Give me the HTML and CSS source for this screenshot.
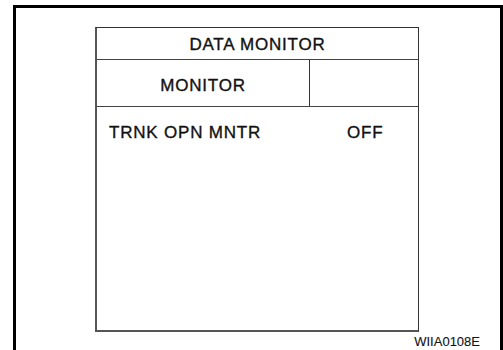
FILE: index.html
```html
<!DOCTYPE html>
<html lang="en">
<head>
  <meta charset="UTF-8" />
  <meta name="viewport" content="width=device-width, initial-scale=1.0" />
  <title>Data Monitor</title>
  <link rel="stylesheet" href="styles.css">
</head>
<body>
  <div class="frame">
    <div class="screen">
      <div class="screen-title">DATA MONITOR</div>
      <div class="screen-head">
        <div class="head-label">MONITOR</div>
        <div class="head-blank"></div>
      </div>
      <div class="screen-body">
        <div class="item-row">
          <span class="item-name">TRNK OPN MNTR</span>
          <span class="item-value">OFF</span>
        </div>
      </div>
    </div>
    <div class="fig-code">WIIA0108E</div>
  </div>
</body>
</html>
```

FILE: styles.css
```css
body {
  margin: 0;
  overflow: hidden;
  background-color: white;
  font-family: "Liberation Sans", Arial, sans-serif;
  color: #111;
  -webkit-text-stroke: 0.35px #111;
}

.frame {
  box-sizing: border-box;
  margin: 5px 0 0 13px;
  width: 490px;
  height: 345px;
  border: 3px solid black;
  border-bottom: none;
  padding: 19px 20px 0 79px;
}

.screen {
  box-sizing: border-box;
  width: 324px;
  height: 305px;
  border: 1px solid #333;
  border-left: 2px solid #555;
  border-bottom: 2px solid #555;
  display: flex;
  flex-direction: column;
}

.screen-title {
  height: 32px;
  line-height: 30px;
  padding-top: 2px;
  box-sizing: border-box;
  border-bottom: 1px solid #444;
  text-align: center;
  font-size: 17px;
  letter-spacing: 0.8px;
}

.screen-head {
  display: grid;
  grid-template-columns: 213px 1fr;
  height: 47px;
  box-sizing: border-box;
  border-bottom: 1px solid #444;
}

.head-label {
  text-align: center;
  font-size: 17px;
  letter-spacing: 0.8px;
  line-height: 40px;
  padding-top: 6px;
  border-right: 1px solid #333;
}

.screen-body {
  flex: 1;
  padding: 16px 0 0 12px;
}

.item-row {
  display: grid;
  grid-template-columns: 238px auto;
  font-size: 17px;
  letter-spacing: 0.8px;
  line-height: 20px;
}

.fig-code {
  margin-top: 3px;
  text-align: right;
  font-size: 13px;
  line-height: 13px;
  -webkit-text-stroke: 0.1px #111;
}
```
